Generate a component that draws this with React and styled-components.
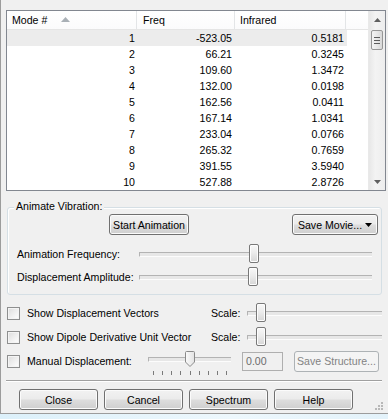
import React from "react";
import styled, { createGlobalStyle } from "styled-components";

const GlobalStyle = createGlobalStyle`
  html, body {
    margin: 0;
    padding: 0;
    background: #f0f0f0;
  }
  body {
    font-family: "Liberation Sans", "DejaVu Sans", sans-serif;
    font-size: 10.6px;
    color: #000;
  }
  * {
    box-sizing: border-box;
  }
`;

const Window = styled.div`
  width: 388px;
  height: 414px;
  border-left: 1px solid #9c9c9c;
  border-bottom: 1px solid #9c9c9c;
  background: #f0f0f0;
  padding: 10px 2px 0 5px;
  display: flex;
  flex-direction: column;
`;

const Frame = styled.div`
  height: 5px;
  background: linear-gradient(90deg, #dcf0fa, #eef8fd 60%, #e3f2fa);
`;

/* ---------- list view ---------- */

const Table = styled.div`
  height: 181px;
  border: 1px solid #828790;
  background: #fff;
  display: flex;
`;

const List = styled.div`
  flex: 1;
  display: flex;
  flex-direction: column;
`;

const cols = "130px 98px 111px";

const Header = styled.div`
  height: 19px;
  display: grid;
  grid-template-columns: ${cols} 1fr;
  border-bottom: 1px solid #e5e5e5;
  background: linear-gradient(#ffffff, #fbfbfc);
`;

const HeaderCell = styled.div`
  display: flex;
  align-items: center;
  padding-left: ${(p) => p.$pad || 5}px;
  border-right: 1px solid #e3e5e7;
  &:last-child {
    border-right: none;
  }
`;

const SortArrow = styled.svg`
  margin-left: 14px;
  margin-top: -2px;
`;

const Row = styled.div`
  height: 16px;
  width: 340px;
  display: grid;
  grid-template-columns: ${cols};
  align-items: center;
  background: ${(p) => (p.$selected ? "#ececec" : "transparent")};
`;

const Cell = styled.div`
  text-align: right;
  padding-right: ${(p) => p.$pad}px;
  line-height: 16px;
`;

const ScrollBar = styled.div`
  width: 17px;
  background: linear-gradient(90deg, #e7e7e7, #f3f3f3 40%, #ededed);
  border-left: 1px solid #e9e9e9;
  display: flex;
  flex-direction: column;
  align-items: center;
`;

const ArrowBtn = styled.div`
  height: 17px;
  width: 100%;
  display: flex;
  align-items: center;
  justify-content: center;
`;

const Thumb = styled.div`
  margin-top: 2px;
  width: 12px;
  height: 20px;
  border: 1px solid #979797;
  border-radius: 2px;
  background: linear-gradient(90deg, #f4f4f4, #e8e8e8 50%, #d8d8d8);
  display: flex;
  flex-direction: column;
  align-items: center;
  justify-content: center;
  gap: 2px;
  & > span {
    width: 6px;
    height: 1px;
    background: #5c5c5c;
  }
`;

const ScrollFill = styled.div`
  flex: 1;
`;

/* ---------- buttons ---------- */

const Button = styled.button`
  font: inherit;
  color: ${(p) => (p.disabled ? "#838383" : "#000")};
  width: ${(p) => p.$w}px;
  height: ${(p) => p.$h || 21}px;
  margin-left: ${(p) => p.$ml || 0}px;
  padding: 0;
  border: 1px solid ${(p) => (p.disabled ? "#adb2b5" : "#707070")};
  border-radius: 3px;
  background: ${(p) =>
    p.disabled
      ? "#f4f4f4"
      : "linear-gradient(#f2f2f2 0%, #ebebeb 48%, #dddddd 52%, #cfcfcf 100%)"};
  box-shadow: ${(p) => (p.disabled ? "none" : "inset 0 0 0 1px #fbfbfb")};
  display: flex;
  align-items: center;
  justify-content: center;
  gap: 3px;
`;

/* ---------- group box ---------- */

const Group = styled.div`
  position: relative;
  margin: 16px 4px 0 1px;
  border: 1px solid #d5dfe5;
  border-radius: 3px;
  box-shadow: inset 1px 1px 0 #fff;
  padding: 6px 0 7px;
`;

const GroupTitle = styled.div`
  position: absolute;
  top: -8px;
  left: 6px;
  padding: 0 2px;
  line-height: 13px;
  background: #f0f0f0;
`;

const ButtonRow = styled.div`
  display: flex;
  justify-content: space-between;
  padding: 0 3px 0 101px;
`;

const SliderRow = styled.div`
  display: flex;
  align-items: center;
  height: 20px;
  margin-top: ${(p) => p.$mt}px;
  padding-right: 9px;
`;

const SliderLabel = styled.div`
  width: 131px;
  padding-left: 9px;
  white-space: nowrap;
`;

const Track = styled.div`
  position: relative;
  flex: ${(p) => (p.$w ? "none" : "1")};
  width: ${(p) => (p.$w ? `${p.$w}px` : "auto")};
  height: ${(p) => p.$h || 20}px;
  &::before {
    content: "";
    position: absolute;
    left: 0;
    right: 0;
    top: ${(p) => p.$line || 8}px;
    height: 3px;
    border-top: 1px solid #b3b3b3;
    border-left: 1px solid #b3b3b3;
    border-bottom: 1px solid #fcfcfc;
    background: #e7e7e7;
  }
`;

const TrackThumb = styled.div`
  position: absolute;
  top: 0;
  left: ${(p) => p.$left}px;
  width: 10px;
  height: 19px;
  border: 1px solid #787878;
  border-radius: 2px;
  background: linear-gradient(#f8f8f8, #ececec 45%, #d6d6d6);
  box-shadow: inset 0 0 0 1px #fdfdfd;
`;

const PointerThumb = styled.svg`
  position: absolute;
  top: 2px;
  left: ${(p) => p.$left}px;
`;

const Ticks = styled.div`
  position: absolute;
  left: 5px;
  right: 4px;
  top: 22px;
  display: flex;
  justify-content: space-between;
  & > span {
    width: 1px;
    height: 4px;
    background: #7a7a7a;
  }
`;

/* ---------- option rows ---------- */

const Options = styled.div`
  margin-top: 6px;
  padding-right: 4px;
`;

const OptionRow = styled.div`
  display: flex;
  align-items: center;
  height: 24px;
  padding-left: 1px;
`;

const CheckArea = styled.div`
  width: ${(p) => p.$w}px;
  display: flex;
  align-items: center;
  gap: 7px;
  white-space: nowrap;
`;

const CheckBox = styled.span`
  width: 13px;
  height: 13px;
  border: 1px solid #8e8f8f;
  background: linear-gradient(135deg, #dcdcdc, #f2f2f2 60%, #ffffff);
  box-shadow: inset 0 0 0 1px #f4f4f4;
`;

const ScaleLabel = styled.div`
  width: 36px;
`;

const TextBox = styled.div`
  width: 41px;
  height: 19px;
  margin-left: 11px;
  border: 1px solid #afafaf;
  background: #f0f0f0;
  color: #6d6d6d;
  padding-left: 3px;
  line-height: 17px;
`;

const Separator = styled.div`
  margin: 7px 4px 0 0;
  border-top: 1px solid #a0a0a0;
  border-bottom: 1px solid #fff;
`;

const Footer = styled.div`
  display: flex;
  gap: 6px;
  padding: 7px 3px 0 13px;
  height: 28px;
`;

const Grip = styled.svg`
  margin-left: auto;
  align-self: flex-end;
`;

const modes = [
  [1, "-523.05", "0.5181"],
  [2, "66.21", "0.3245"],
  [3, "109.60", "1.3472"],
  [4, "132.00", "0.0198"],
  [5, "162.56", "0.0411"],
  [6, "167.14", "1.0341"],
  [7, "233.04", "0.0766"],
  [8, "265.32", "0.7659"],
  [9, "391.55", "3.5940"],
  [10, "527.88", "2.8726"],
];

const Arrow = ({ down }) => (
  <svg width="7" height="4" viewBox="0 0 7 4">
    <polygon points={down ? "0,0 7,0 3.5,4" : "0,4 7,4 3.5,0"} fill="#5f5f5f" />
  </svg>
);

const App = () => {
  return (
    <>
      <GlobalStyle />
      <Window>
        <Table>
          <List>
            <Header>
              <HeaderCell $pad={5}>
                Mode #
                <SortArrow width="9" height="5" viewBox="0 0 9 5">
                  <polygon points="0,5 9,5 4.5,0" fill="#a9b0b6" />
                </SortArrow>
              </HeaderCell>
              <HeaderCell $pad={6}>Freq</HeaderCell>
              <HeaderCell $pad={5}>Infrared</HeaderCell>
              <HeaderCell />
            </Header>
            {modes.map(([n, f, ir]) => (
              <Row key={n} $selected={n === 1}>
                <Cell $pad={2}>{n}</Cell>
                <Cell $pad={3}>{f}</Cell>
                <Cell $pad={2}>{ir}</Cell>
              </Row>
            ))}
          </List>
          <ScrollBar>
            <ArrowBtn>
              <Arrow />
            </ArrowBtn>
            <Thumb>
              <span />
              <span />
              <span />
            </Thumb>
            <ScrollFill />
            <ArrowBtn>
              <Arrow down />
            </ArrowBtn>
          </ScrollBar>
        </Table>

        <Group>
          <GroupTitle>Animate Vibration:</GroupTitle>
          <ButtonRow>
            <Button $w={80}>Start Animation</Button>
            <Button $w={86}>
              Save Movie...
              <svg width="7" height="4" viewBox="0 0 7 4">
                <polygon points="0,0 7,0 3.5,4" fill="#000" />
              </svg>
            </Button>
          </ButtonRow>
          <SliderRow $mt={9}>
            <SliderLabel>Animation Frequency:</SliderLabel>
            <Track>
              <TrackThumb $left={110} />
            </Track>
          </SliderRow>
          <SliderRow $mt={3}>
            <SliderLabel>Displacement Amplitude:</SliderLabel>
            <Track>
              <TrackThumb $left={109} />
            </Track>
          </SliderRow>
        </Group>

        <Options>
          <OptionRow>
            <CheckArea $w={204}>
              <CheckBox />
              Show Displacement Vectors
            </CheckArea>
            <ScaleLabel>Scale:</ScaleLabel>
            <Track>
              <TrackThumb $left={9} />
            </Track>
          </OptionRow>
          <OptionRow>
            <CheckArea $w={204}>
              <CheckBox />
              Show Dipole Derivative Unit Vector
            </CheckArea>
            <ScaleLabel>Scale:</ScaleLabel>
            <Track>
              <TrackThumb $left={9} />
            </Track>
          </OptionRow>
          <OptionRow>
            <CheckArea $w={141}>
              <CheckBox />
              Manual Displacement:
            </CheckArea>
            <Track $w={83} $h={24} $line={8}>
              <PointerThumb $left={37} width="10" height="16" viewBox="0 0 10 16">
                <defs>
                  <linearGradient id="pt" x1="0" y1="0" x2="1" y2="0">
                    <stop offset="0" stopColor="#fbfbfb" />
                    <stop offset="1" stopColor="#e2e2e2" />
                  </linearGradient>
                </defs>
                <path
                  d="M0.5 1.5 Q0.5 0.5 1.5 0.5 L8.5 0.5 Q9.5 0.5 9.5 1.5 L9.5 11 L5 15.5 L0.5 11 Z"
                  fill="url(#pt)"
                  stroke="#8a8a8a"
                />
              </PointerThumb>
              <Ticks>
                {Array.from({ length: 9 }).map((_, i) => (
                  <span key={i} />
                ))}
              </Ticks>
            </Track>
            <TextBox>0.00</TextBox>
            <Button $w={85} $ml={11} disabled>
              Save Structure...
            </Button>
          </OptionRow>
        </Options>

        <Separator />

        <Footer>
          <Button $w={79}>Close</Button>
          <Button $w={79}>Cancel</Button>
          <Button $w={79}>Spectrum</Button>
          <Button $w={79}>Help</Button>
          <Grip width="8" height="8" viewBox="0 0 8 8">
            {[
              [6, 0],
              [6, 3],
              [3, 3],
              [6, 6],
              [3, 6],
              [0, 6],
            ].map(([x, y]) => (
              <rect key={`${x}-${y}`} x={x} y={y} width="2" height="2" fill="#b8b8b8" />
            ))}
          </Grip>
        </Footer>
      </Window>
      <Frame />
    </>
  );
};

export default App;
